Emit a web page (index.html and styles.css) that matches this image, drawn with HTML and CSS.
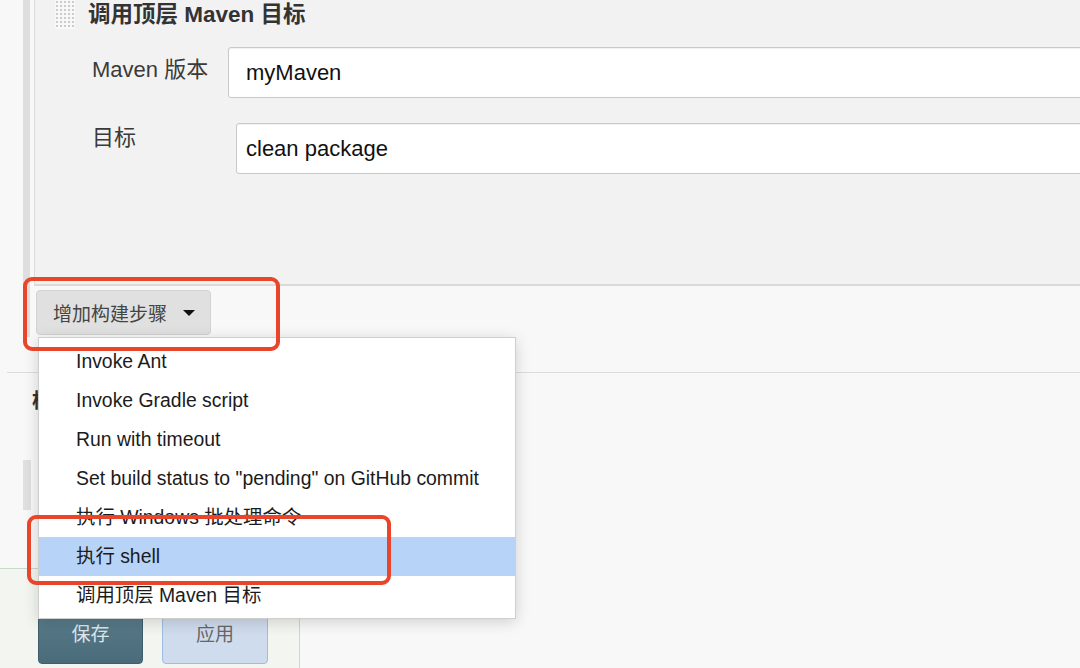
FILE: index.html
```html
<!DOCTYPE html>
<html lang="zh-CN">
<head>
  <meta charset="UTF-8" />
  <title>配置 - Jenkins</title>
  <link rel="stylesheet" href="styles.css">
</head>
<body>
  <div class="screen">
    <!-- 构建步骤 -->
    <div class="builders">
      <div class="rail"></div>
      <div class="builders-main">
        <div class="step">
          <div class="step-head">
            <span class="handle"></span>
            <span class="step-title">调用顶层 Maven 目标</span>
          </div>
          <div class="field">
            <label class="field-label">Maven 版本</label>
            <input class="field-input" type="text" value="myMaven" readonly />
          </div>
          <div class="field field-goal">
            <label class="field-label">目标</label>
            <input class="field-input" type="text" value="clean package" readonly />
          </div>
        </div>
        <div class="add-row">
          <button class="add-btn">增加构建步骤<span class="caret"></span></button>
        </div>
      </div>
    </div>

    <!-- 构建后操作 (mostly under the open menu) -->
    <div class="post">
      <div class="post-title">构建后操作</div>
      <div class="post-rail"></div>
    </div>

    <div class="bottom-bar">
      <button class="btn btn-save">保存</button>
      <button class="btn btn-apply">应用</button>
    </div>

    <!-- 下拉菜单 -->
    <ul class="menu">
      <li>Invoke Ant</li>
      <li>Invoke Gradle script</li>
      <li>Run with timeout</li>
      <li>Set build status to "pending" on GitHub commit</li>
      <li>执行 Windows 批处理命令</li>
      <li class="active">执行 shell</li>
      <li>调用顶层 Maven 目标</li>
    </ul>

    <div class="mark mark-add"></div>
    <div class="mark mark-shell"></div>
  </div>
</body>
</html>
```

FILE: styles.css
```css
body {
  margin: 0;
  background: #f8f8f8;
  font-family: "Liberation Sans", "Noto Sans CJK SC", sans-serif;
  color: #333;
}
.screen {
  position: relative;
  width: 1080px;
  height: 668px;
  overflow: hidden;
}
.builders {
  display: flex;
  align-items: flex-start;
  padding-left: 23px;
}
.rail {
  width: 7px;
  height: 337px;
  background: #dedede;
  flex-shrink: 0;
}
.builders-main {
  flex: 1;
  min-width: 0;
  margin-left: 4px;
}
.step {
  box-sizing: border-box;
  height: 286px;
  background: #f2f2f2;
  border-left: 1px solid #dcdcdc;
  border-bottom: 2px solid #dadada;
}
.step-head {
  display: flex;
  align-items: flex-start;
  height: 30px;
  padding-left: 20px;
}
.handle {
  width: 20px;
  height: 29px;
  margin-right: 13px;
  background-color: #f8f8f8;
  background-image: radial-gradient(#cbcbcb 0.9px, transparent 1.3px);
  background-size: 4px 4px;
}
.step-title {
  font-size: 22.5px;
  line-height: 30px;
  font-weight: bold;
  color: #333;
}
.field {
  display: flex;
  align-items: flex-start;
  padding-left: 57px;
  margin-top: 17px;
}
.field-label {
  width: 136px;
  flex-shrink: 0;
  padding-top: 8px;
  font-size: 22px;
  line-height: 30px;
  color: #3a3a3a;
}
.field-goal {
  margin-top: 25px;
}
.field-goal .field-label {
  width: 144px;
  padding-top: 0;
}
.field-input {
  flex: 1;
  min-width: 0;
  box-sizing: border-box;
  height: 51px;
  margin-right: -20px;
  padding: 0 17px;
  border: 1px solid #c9c9c9;
  border-radius: 3px;
  box-shadow: inset 0 1px 1px rgba(0, 0, 0, 0.06);
  background: #fff;
  font-family: "Liberation Sans", sans-serif;
  font-size: 22px;
  color: #111;
  outline: none;
}
.field-goal .field-input {
  padding-left: 9px;
}
.add-row {
  padding: 4px 0 0 2px;
}
.add-btn {
  display: flex;
  align-items: center;
  box-sizing: border-box;
  width: 175px;
  height: 45px;
  padding: 0 15px 0 16px;
  background: #e0e0e0;
  border: 1px solid #d3d3d3;
  border-radius: 4px;
  font-family: "Liberation Sans", "Noto Sans CJK SC", sans-serif;
  font-size: 19px;
  color: #444;
}
.caret {
  margin-left: auto;
  width: 0;
  height: 0;
  border-left: 6px solid transparent;
  border-right: 6px solid transparent;
  border-top: 6px solid #111;
}
.post {
  box-sizing: border-box;
  height: 196px;
  margin-top: 35px;
  margin-left: 7px;
  border-top: 1px solid #dcdcdc;
}
.post-title {
  padding: 14px 0 0 25px;
  font-size: 20px;
  line-height: 28px;
  font-weight: bold;
  color: #333;
}
.post-rail {
  width: 8px;
  height: 50px;
  margin: 45px 0 0 16px;
  background: #e0e0e0;
}
.bottom-bar {
  display: flex;
  gap: 19px;
  box-sizing: border-box;
  width: 300px;
  height: 100px;
  padding: 31px 0 0 38px;
  background: #f3f6f0;
  border-top: 1px solid #c7dbc9;
  border-right: 1px solid #c7dbc9;
}
.btn {
  box-sizing: border-box;
  height: 64px;
  border-radius: 4px;
  font-family: "Liberation Sans", "Noto Sans CJK SC", sans-serif;
  font-size: 19px;
}
.btn-save {
  width: 105px;
  background: linear-gradient(#5d808e, #4a6b79);
  border: 1px solid #3f5e6a;
  color: #dde6ea;
}
.btn-apply {
  width: 106px;
  background: #cfdced;
  border: 1px solid #9fbde2;
  color: #666;
}
.menu {
  position: absolute;
  left: 38px;
  top: 337px;
  box-sizing: border-box;
  width: 478px;
  height: 282px;
  margin: 0;
  padding: 4px 0;
  list-style: none;
  background: #fff;
  border: 1px solid #cfcfcf;
  box-shadow: 0 3px 14px rgba(0, 0, 0, 0.16);
}
.menu li {
  height: 39px;
  line-height: 39px;
  padding-left: 37px;
  font-size: 19.4px;
  color: #1b1b1b;
  white-space: nowrap;
}
.menu li.active {
  background: #b7d4f8;
}
.mark {
  position: absolute;
  box-sizing: border-box;
  border: 4px solid #e9452b;
  border-radius: 9px;
}
.mark-add {
  left: 23px;
  top: 277px;
  width: 257px;
  height: 74px;
}
.mark-shell {
  left: 27px;
  top: 515px;
  width: 364px;
  height: 70px;
}
```
